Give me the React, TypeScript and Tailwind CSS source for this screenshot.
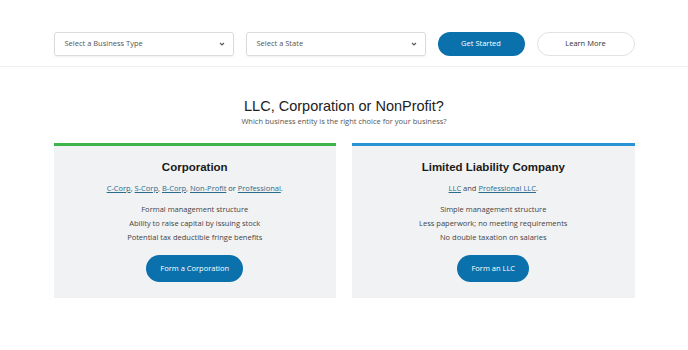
import React from "react";

const sans = { fontFamily: '"Open Sans", "Noto Sans", sans-serif' };

function Chevron() {
  return (
    <svg width="6" height="4" viewBox="0 0 6 4" className="text-[#555]">
      <path d="M1 1 L3 3 L5 1" fill="none" stroke="currentColor" strokeWidth="1.1" />
    </svg>
  );
}

function Select({ label }: { label: string }) {
  return (
    <div className="flex h-[24px] w-[180px] items-center justify-between rounded-[3px] border border-[#dcdcdc] bg-white pl-[10px] pr-[8px] text-[7.5px] text-[#555] shadow-[0_1px_2px_rgba(0,0,0,0.06)]">
      <span>{label}</span>
      <Chevron />
    </div>
  );
}

function Card({
  border,
  title,
  links,
  bullets,
  button,
}: {
  border: string;
  title: string;
  links: React.ReactNode;
  bullets: string[];
  button: string;
}) {
  return (
    <div className={`flex h-[155px] flex-col items-center bg-[#f1f2f3] border-t-[3px] ${border}`}>
      <div
        className="mt-[13px] text-[11.5px] font-bold leading-[16px] text-[#1a1a1a]"
        style={{ fontFamily: '"Liberation Sans", Arial, sans-serif' }}
      >
        {title}
      </div>
      <div className="mt-[7px] text-[7.5px] leading-[12px] text-[#444]">{links}</div>
      <div className="mt-[8px] flex flex-col items-center text-[7.5px] leading-[14px] text-[#444]">
        {bullets.map((b) => (
          <div key={b}>{b}</div>
        ))}
      </div>
      <div className="mt-[11px] flex h-[27px] items-center rounded-full bg-[#0b71ad] px-[14px] text-[7.5px] text-white">
        {button}
      </div>
    </div>
  );
}

const L = ({ children }: { children: React.ReactNode }) => (
  <span className="text-[#2b6c8c] underline underline-offset-[1px]">{children}</span>
);

export default function App() {
  return (
    <div className="h-[350px] w-[688px] bg-white" style={sans}>
      <div className="border-b border-[#eeeeee]">
        <div className="mx-auto flex w-[581px] items-center gap-[12px] pb-[10px] pt-[32px]">
          <Select label="Select a Business Type" />
          <Select label="Select a State" />
          <div className="flex h-[24px] w-[87px] items-center justify-center rounded-full bg-[#0b71ad] text-[7.5px] text-white">
            Get Started
          </div>
          <div className="flex h-[24px] w-[98px] items-center justify-center rounded-full border border-[#e2e2e2] bg-white text-[7.5px] text-[#333]">
            Learn More
          </div>
        </div>
      </div>

      <div className="mx-auto flex w-[581px] flex-col items-center">
        <div
          className="mt-[29px] text-[14.5px] leading-[20px] text-[#222]"
          style={{ fontFamily: '"Liberation Sans", Arial, sans-serif' }}
        >
          LLC, Corporation or NonProfit?
        </div>
        <div className="text-[7.5px] leading-[10px] text-[#555]">
          Which business entity is the right choice for your business?
        </div>

        <div className="mt-[17px] grid w-full grid-cols-2 gap-[16px]">
          <Card
            border="border-[#3db54a]"
            title="Corporation"
            links={
              <>
                <L>C-Corp</L>, <L>S-Corp</L>, <L>B-Corp</L>, <L>Non-Profit</L> or <L>Professional</L>.
              </>
            }
            bullets={[
              "Formal management structure",
              "Ability to raise capital by issuing stock",
              "Potential tax deductible fringe benefits",
            ]}
            button="Form a Corporation"
          />
          <Card
            border="border-[#2993d5]"
            title="Limited Liability Company"
            links={
              <>
                <L>LLC</L> and <L>Professional LLC</L>.
              </>
            }
            bullets={[
              "Simple management structure",
              "Less paperwork; no meeting requirements",
              "No double taxation on salaries",
            ]}
            button="Form an LLC"
          />
        </div>
      </div>
    </div>
  );
}
